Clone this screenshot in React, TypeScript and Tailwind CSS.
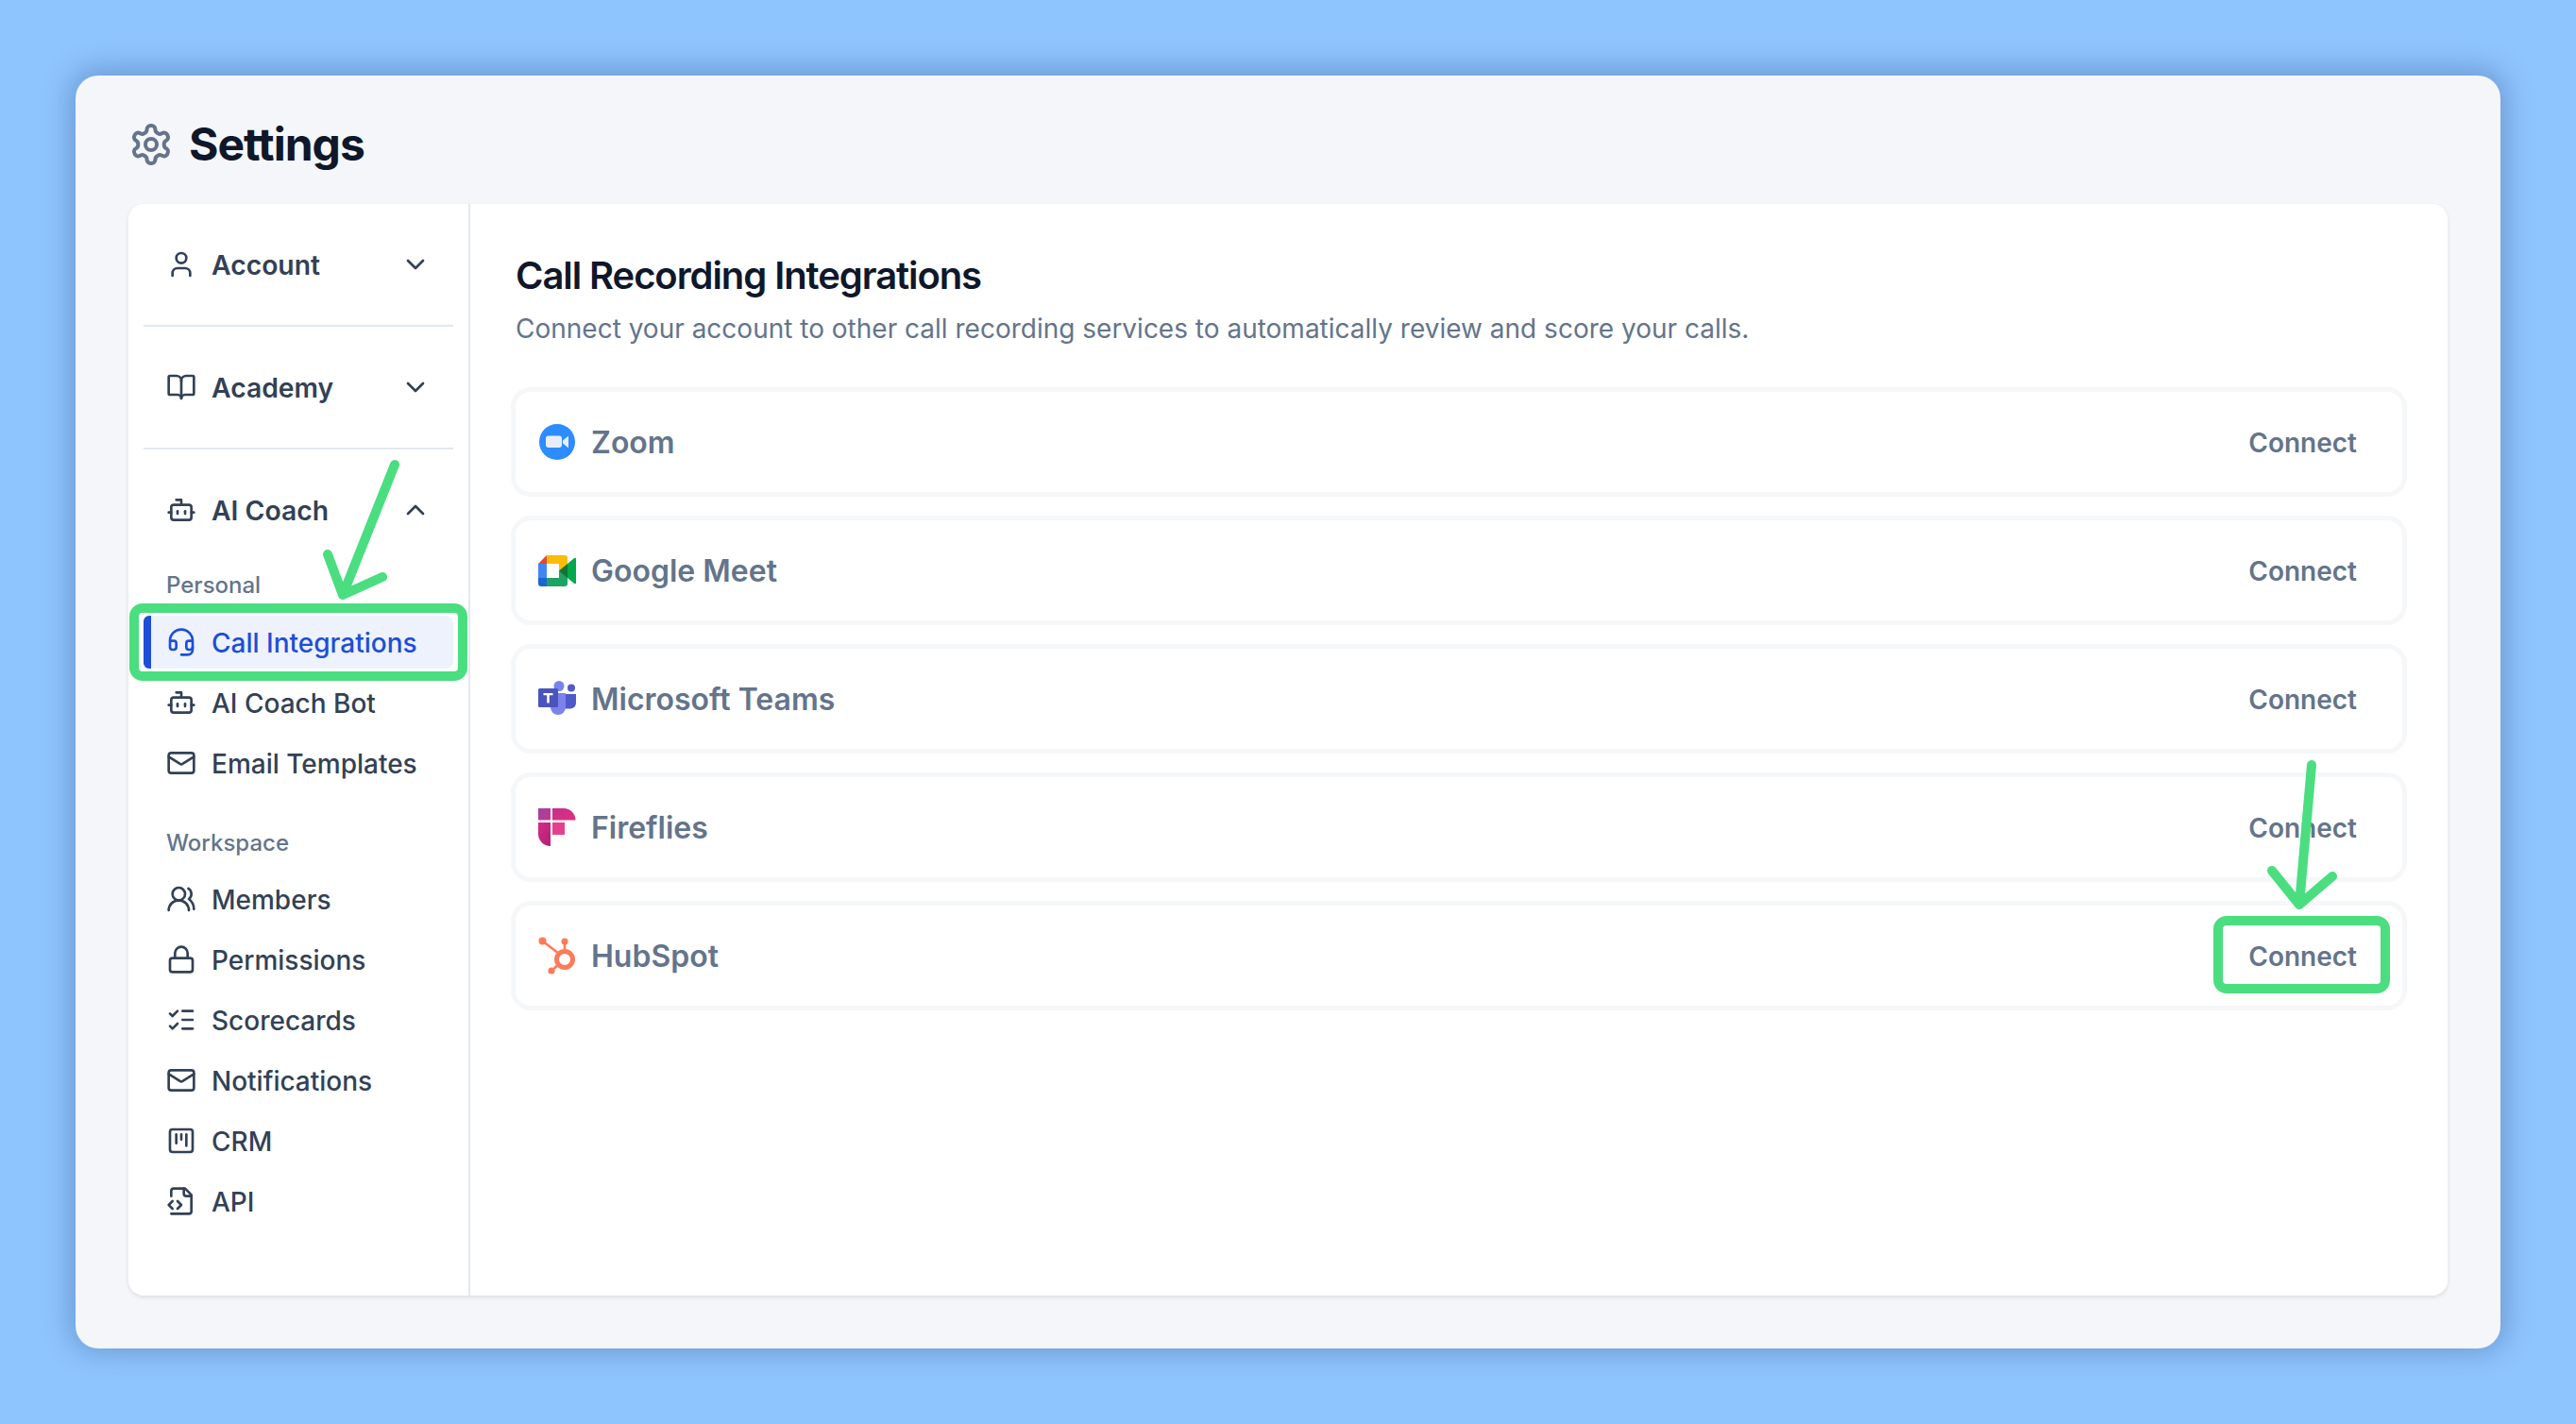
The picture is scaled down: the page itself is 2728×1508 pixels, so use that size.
import {
  BookOpen,
  Bot,
  ChevronDown,
  ChevronUp,
  Headset,
  ListChecks,
  Lock,
  Mail,
  SquareKanban,
  User,
  UsersRound,
} from "lucide-react";
import type { ComponentType, ReactNode } from "react";

type Icon = ComponentType<{ className?: string }>;

function GearIcon({ className }: { className?: string }) {
  return (
    <svg viewBox="0 0 24 24" fill="none" stroke="currentColor" strokeWidth="2" strokeLinecap="round" strokeLinejoin="round" className={className}>
      <path d="M12.22 2h-.44a2 2 0 0 0-2 2v.18a2 2 0 0 1-1 1.73l-.43.25a2 2 0 0 1-2 0l-.15-.08a2 2 0 0 0-2.73.73l-.22.38a2 2 0 0 0 .73 2.73l.15.1a2 2 0 0 1 1 1.72v.51a2 2 0 0 1-1 1.74l-.15.09a2 2 0 0 0-.73 2.73l.22.38a2 2 0 0 0 2.73.73l.15-.08a2 2 0 0 1 2 0l.43.25a2 2 0 0 1 1 1.73V20a2 2 0 0 0 2 2h.44a2 2 0 0 0 2-2v-.18a2 2 0 0 1 1-1.73l.43-.25a2 2 0 0 1 2 0l.15.08a2 2 0 0 0 2.73-.73l.22-.39a2 2 0 0 0-.73-2.73l-.15-.08a2 2 0 0 1-1-1.74v-.5a2 2 0 0 1 1-1.74l.15-.09a2 2 0 0 0 .73-2.73l-.22-.38a2 2 0 0 0-2.73-.73l-.15.08a2 2 0 0 1-2 0l-.43-.25a2 2 0 0 1-1-1.73V4a2 2 0 0 0-2-2z" />
      <circle cx="12" cy="12" r="3" />
    </svg>
  );
}

function FileCodeIcon({ className }: { className?: string }) {
  return (
    <svg viewBox="0 0 24 24" fill="none" stroke="currentColor" strokeWidth="2" strokeLinecap="round" strokeLinejoin="round" className={className}>
      <path d="M4 22h14a2 2 0 0 0 2-2V7l-5-5H6a2 2 0 0 0-2 2v4" />
      <path d="M14 2v4a2 2 0 0 0 2 2h4" />
      <path d="m5 12-3 3 3 3" />
      <path d="m9 18 3-3-3-3" />
    </svg>
  );
}

function ZoomLogo() {
  return (
    <svg viewBox="0 0 38 38" className="w-[38px] h-[38px]">
      <circle cx="19" cy="19" r="19" fill="#2d8cff" />
      <rect x="7" y="12.5" width="17" height="12.5" rx="3" fill="#e9eef6" />
      <path d="M25 17.5l5.2-4.3c.4-.3.8 0 .8.4v10.8c0 .5-.4.7-.8.4L25 20.5z" fill="#e9eef6" />
    </svg>
  );
}

function MeetLogo() {
  return (
    <svg viewBox="0 0 40 33" className="w-10 h-[33px]">
      <path d="M9 0L0 9h9z" fill="#ea4335" />
      <path d="M0 9h9v15H0z" fill="#4285f4" />
      <path d="M0 24h9v9H3a3 3 0 0 1-3-3z" fill="#1967d2" />
      <path d="M9 0h19a3 3 0 0 1 3 3v13l-9 .5V9H9z" fill="#fbbc04" />
      <path d="M9 24h13v-7.5l9-.5v14a3 3 0 0 1-3 3H9z" fill="#1ea362" />
      <path d="M22 16.5L31 9v15z" fill="#137333" />
      <path d="M31 9l7.2-6c.7-.6 1.8-.1 1.8.8v25.4c0 .9-1.1 1.4-1.8.8L31 24z" fill="#00a94b" />
    </svg>
  );
}

function TeamsLogo() {
  return (
    <svg viewBox="0 0 40 38" className="w-10 h-[38px]">
      <circle cx="35" cy="7.5" r="4" fill="#5059c9" />
      <path d="M27 14h13v9.5a6 6 0 0 1-6 6h-7z" fill="#5059c9" />
      <circle cx="22" cy="5.5" r="5.5" fill="#7b83eb" />
      <path d="M13 13h16v15a8 8 0 0 1-16 0z" fill="#7b83eb" />
      <rect x="0" y="8" width="21" height="20" rx="1.5" fill="#4b53bc" />
      <path d="M5.5 13h10v2.2h-3.7v8.3H9.2v-8.3H5.5z" fill="#ffffff" />
    </svg>
  );
}

function FirefliesLogo() {
  return (
    <svg viewBox="0 0 40 40" className="w-10 h-10">
      <defs>
        <linearGradient id="ffA" x1="0" y1="0" x2="1" y2="1">
          <stop offset="0" stopColor="#a0449f" />
          <stop offset="1" stopColor="#c2378f" />
        </linearGradient>
        <linearGradient id="ffB" x1="0" y1="0" x2="1" y2="1">
          <stop offset="0" stopColor="#c32f8b" />
          <stop offset="1" stopColor="#e3307c" />
        </linearGradient>
        <linearGradient id="ffC" x1="0" y1="0" x2="1" y2="1">
          <stop offset="0" stopColor="#d42c88" />
          <stop offset="1" stopColor="#b3206f" />
        </linearGradient>
      </defs>
      <path d="M0 0h13v12.5H0z" fill="url(#ffA)" />
      <path d="M15 0h12a12.5 12.5 0 0 1 12.5 12.5H15z" fill="url(#ffB)" />
      <path d="M0 15h13v25A13 13 0 0 1 0 27z" fill="url(#ffC)" />
      <path d="M15 15h13v13H15z" fill="#e5408d" />
    </svg>
  );
}

function HubspotLogo() {
  return (
    <svg viewBox="0 0 40 40" className="w-10 h-10" fill="none" stroke="#ff7a59">
      <circle cx="28" cy="24" r="8.5" strokeWidth="5" />
      <path d="M28 5v11M4.5 4.5L22 18M14 36l8-7" strokeWidth="2.6" />
      <g fill="#ff7a59" stroke="none">
        <circle cx="28" cy="5" r="3.6" />
        <circle cx="4.5" cy="4.5" r="4" />
        <circle cx="14" cy="36" r="3.6" />
      </g>
    </svg>
  );
}

function SectionHeader({ icon: I, label, open }: { icon: Icon; label: string; open?: boolean }) {
  const Chevron = open ? ChevronUp : ChevronDown;
  return (
    <div className="h-32 px-6 flex items-center gap-4 text-[#334155]">
      <I className="w-8 h-8 shrink-0" />
      <span className="flex-1 pt-0.5 text-[28.3px] font-semibold">{label}</span>
      <Chevron className="w-8 h-8" />
    </div>
  );
}

function NavItem({ icon: I, label }: { icon: Icon; label: string }) {
  return (
    <div className="h-14 px-6 flex items-center gap-4 text-[#334155]">
      <I className="w-8 h-8 shrink-0" />
      <span className="pt-0.5 text-[28px] font-medium">{label}</span>
    </div>
  );
}

function GroupLabel({ children, className }: { children: ReactNode; className: string }) {
  return <div className={`h-[30px] px-6 leading-8 text-[24px] font-medium text-[#64748b] ${className}`}>{children}</div>;
}

function Integration({ logo, name, highlight }: { logo: ReactNode; name: string; highlight?: boolean }) {
  return (
    <div className="h-[106px] pl-6 pr-5 flex items-center bg-white rounded-[16px] ring-[5px] ring-[#f5f7f9]">
      <div className="w-10 h-10 flex items-center justify-center">{logo}</div>
      <span className="ml-4 flex-1 pt-0.5 text-[32px] font-semibold text-[#64748b]">{name}</span>
      <button className="relative h-[62px] px-7 pt-0.5 text-[28px] font-semibold text-[#64748b]">
        Connect
        {highlight && (
          <span className="absolute -left-[9px] -right-[7px] -top-[11px] -bottom-[9px] rounded-[14px] border-[10px] border-[#4ade80]" />
        )}
      </button>
    </div>
  );
}

export default function App() {
  return (
    <div className="relative w-[2728px] h-[1508px] p-20 bg-[#8fc5ff] font-['Inter',sans-serif] overflow-hidden">
      <div className="h-full px-14 pb-14 flex flex-col rounded-[24px] bg-[#f4f6fa] shadow-[0_-2px_30px_6px_rgba(0,30,80,0.25)]">
        <header className="h-[136px] shrink-0 pt-2.5 flex items-center gap-4">
          <GearIcon className="w-12 h-12 text-[#64748b] shrink-0" />
          <h1 className="text-[48px] font-bold tracking-[-0.02em] text-[#0f172a]">Settings</h1>
        </header>

        <div className="flex-1 flex bg-white rounded-[16px] shadow-[0_2px_4px_rgba(0,0,0,0.1)]">
          <aside className="w-[362px] shrink-0 px-4 border-r-2 border-[#e2e8f0]">
            <div className="border-b-2 border-[#e2e8f0]">
              <SectionHeader icon={User} label="Account" />
            </div>
            <div className="border-b-2 border-[#e2e8f0]">
              <SectionHeader icon={BookOpen} label="Academy" />
            </div>
            <SectionHeader icon={Bot} label="AI Coach" open />

            <GroupLabel className="mb-[18px]">Personal</GroupLabel>
            <div className="flex flex-col gap-2">
              <div className="relative h-14 px-6 flex items-center gap-4 rounded-[8px] bg-[#edf2fd] text-[#1d4ed8]">
                <span className="absolute left-0 top-0 bottom-0 w-2 rounded-l-[6px] bg-[#1d4ed8]" />
                <Headset className="w-8 h-8 shrink-0" />
                <span className="pt-0.5 text-[28px] font-medium">Call Integrations</span>
                <span className="absolute -left-[15px] -right-[15px] -top-[13px] -bottom-[13px] rounded-[14px] border-[10px] border-[#4ade80]" />
              </div>
              <NavItem icon={Bot} label="AI Coach Bot" />
              <NavItem icon={Mail} label="Email Templates" />
            </div>

            <GroupLabel className="mt-[41px] mb-[17px]">Workspace</GroupLabel>
            <div className="flex flex-col gap-2">
              <NavItem icon={UsersRound} label="Members" />
              <NavItem icon={Lock} label="Permissions" />
              <NavItem icon={ListChecks} label="Scorecards" />
              <NavItem icon={Mail} label="Notifications" />
              <NavItem icon={SquareKanban} label="CRM" />
              <NavItem icon={FileCodeIcon} label="API" />
            </div>
          </aside>

          <main className="flex-1 px-12 pt-[54px]">
            <h2 className="text-[40px] leading-[44px] font-semibold tracking-[-0.027em] text-[#0f172a]">Call Recording Integrations</h2>
            <p className="mt-4 text-[28px] leading-9 text-[#64748b]">
              Connect your account to other call recording services to automatically review and score your calls.
            </p>
            <div className="mt-[49px] flex flex-col gap-[30px]">
              <Integration logo={<ZoomLogo />} name="Zoom" />
              <Integration logo={<MeetLogo />} name="Google Meet" />
              <Integration logo={<TeamsLogo />} name="Microsoft Teams" />
              <Integration logo={<FirefliesLogo />} name="Fireflies" />
              <Integration logo={<HubspotLogo />} name="HubSpot" highlight />
            </div>
          </main>
        </div>
      </div>

      {/* hand-drawn annotation arrows */}
      <svg
        viewBox="0 0 2728 1508"
        className="absolute inset-0 w-full h-full pointer-events-none"
        fill="none"
        stroke="#4ade80"
        strokeWidth="10"
        strokeLinecap="round"
        strokeLinejoin="round"
      >
        <path d="M418 492L363 630M347 587L363 630L405 611" />
        <path d="M2448 810L2435 958M2406 922L2435 958L2470 928" />
      </svg>
    </div>
  );
}
